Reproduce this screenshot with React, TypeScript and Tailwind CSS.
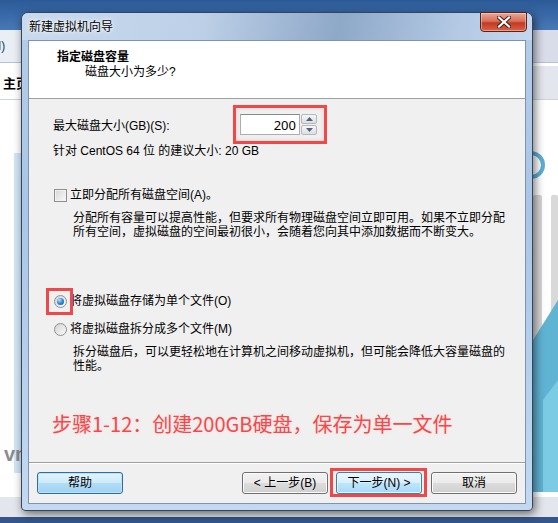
import React from "react";

const WinButton = ({ label, variant }: { label: string; variant?: "focus" | "default" }) => {
  const skin =
    variant === "focus"
      ? "border-[#2c6ea3] shadow-[inset_0_0_0_1px_#b9e3fa] bg-[linear-gradient(to_bottom,#e3f4fd_0%,#cdeafb_50%,#b2dcf6_50%,#9fd3f2_100%)]"
      : variant === "default"
      ? "border-[#3c7fb1] shadow-[inset_0_0_0_1px_#e8f6fd] bg-[linear-gradient(to_bottom,#eaf6fd_0%,#d9f0fc_50%,#bee6fd_50%,#a7d9f5_100%)]"
      : "border-[#707070] shadow-[inset_0_0_0_1px_#fbfbfb] bg-[linear-gradient(to_bottom,#f2f2f2_0%,#ebebeb_50%,#dddddd_50%,#cfcfcf_100%)]";
  return (
    <div
      className={`w-[86px] h-[22px] rounded-[3px] border flex items-center justify-center text-[12px] text-black ${skin}`}
    >
      {label}
    </div>
  );
};

const CheckBox = () => (
  <span className="w-[13px] h-[13px] shrink-0 border border-[#8e8f8f] bg-[linear-gradient(135deg,#d6d6d6,#f9f9f9)] shadow-[inset_0_0_0_1px_#f1f1f1]" />
);

const Radio = ({ checked }: { checked?: boolean }) => (
  <span className="w-[13px] h-[13px] shrink-0 rounded-full border border-[#8e8f8f] bg-[linear-gradient(135deg,#d4d4d4,#fafafa)] flex items-center justify-center">
    {checked && (
      <span className="w-[7px] h-[7px] rounded-full bg-[radial-gradient(circle_at_35%_30%,#b8e4ff_0%,#3b8fd6_45%,#0d4f93_100%)]" />
    )}
  </span>
);

const SpinArrow = ({ up }: { up?: boolean }) => (
  <div className="w-[16px] h-[10px] rounded-[2px] border border-[#b4b7bd] bg-[linear-gradient(to_bottom,#f6f6f6,#dedede)] flex items-center justify-center">
    <svg width="7" height="4" viewBox="0 0 7 4">
      {up ? <path d="M0 4 L3.5 0 L7 4 Z" fill="#4d6185" /> : <path d="M0 0 L3.5 4 L7 0 Z" fill="#4d6185" />}
    </svg>
  </div>
);

export default function App() {
  return (
    <div className="relative w-[558px] h-[523px] overflow-hidden bg-white font-['Liberation_Sans','Noto_Sans_CJK_SC',sans-serif]">
      {/* host window behind the wizard */}
      <div className="flex flex-col h-full">
        <div className="h-[30px] bg-[linear-gradient(to_bottom,#2b5a97,#4878b6)]" />
        <div className="h-[33px] flex justify-between bg-[#eaeef5] border-b border-[#b7c2d4]">
          <span className="text-[12px] text-[#1e395b] -ml-[6px] pt-[7px]">(I)</span>
          <span className="w-[25px] bg-[#d9dce9]" />
        </div>
        <div className="h-[37px] flex justify-between bg-white border-b border-[#cdd3dd]">
          <span className="text-[13px] font-bold text-black pl-[3px] pt-[11px]">主页</span>
          <span className="w-[25px] bg-[#e4e6ed] border-t-[3px] border-white" />
        </div>
        <div className="flex-1 flex justify-between">
          <svg width="22" height="397" viewBox="0 0 22 397">
            <rect x="14" y="53" width="8" height="320" fill="#d3e6f7" />
            <text x="4" y="361" fontSize="20" fontWeight="bold" fill="#8c8c8c" fontFamily="Liberation Sans">vm</text>
          </svg>
          <svg width="25" height="397" viewBox="0 0 25 397">
            <circle cx="-2" cy="65" r="12" stroke="#5eaed8" strokeWidth="4" fill="none" />
            <rect x="0" y="95" width="9" height="150" rx="2" fill="#d6d6d6" />
            <rect x="18" y="95" width="7" height="150" rx="2" fill="#d9d9d9" />
            <path d="M0 240 L25 200 L25 392 L0 392 Z" fill="#5fb3d3" />
            <path d="M10 300 L25 280 L25 392 L10 392 Z" fill="#7ccbe4" />
          </svg>
        </div>
        <div className="h-[20px] bg-[#e3e6ec]" />
        <div className="h-[6px] bg-[#34568a]" />
      </div>

      {/* wizard dialog */}
      <div className="absolute left-[21px] top-[12px] w-[512px] h-[499px] rounded-t-[7px] rounded-b-[4px] border border-[#34465e] shadow-[2px_3px_10px_rgba(0,0,0,0.55)] bg-[linear-gradient(to_bottom,#b5cde8,#a9c6e6_40%,#c2d9f0)] flex flex-col">
        <div className="relative h-[27px] rounded-t-[6px] bg-[linear-gradient(100deg,#c9daee_0%,#bdd0e7_35%,#8ea8c8_62%,#b3c9e4_85%,#c4d7ee_100%)] flex items-center pl-[7px]">
          <span className="text-[12px] text-black [text-shadow:0_0_6px_#ffffff,0_0_3px_#ffffff]">新建虚拟机向导</span>
          <div className="absolute right-[5px] top-[-1px] w-[47px] h-[20px] rounded-b-[4px] border border-[#5a2119] bg-[linear-gradient(to_bottom,#e9a897_0%,#d7705a_45%,#c43a22_55%,#d5634a_100%)] shadow-[inset_0_0_0_1px_rgba(255,220,210,0.5)] flex items-center justify-center">
            <svg width="14" height="12" viewBox="0 0 14 12">
              <path d="M2 1.5 L12 10.5 M12 1.5 L2 10.5" stroke="#3b1a14" strokeWidth="4" strokeLinecap="square" />
              <path d="M2 1.5 L12 10.5 M12 1.5 L2 10.5" stroke="#ffffff" strokeWidth="2.2" strokeLinecap="square" />
            </svg>
          </div>
        </div>

        <div className="mx-[6px] mb-[6px] flex-1 border border-[#7f93ad] bg-[#f0f0f0] flex flex-col text-[12px] text-black">
          {/* header */}
          <div className="h-[58px] bg-white border-b border-[#a0a0a0] pt-[9px] leading-[15px]">
            <div className="pl-[28px] font-bold">指定磁盘容量</div>
            <div className="pl-[56px]">磁盘大小为多少?</div>
          </div>

          {/* body */}
          <div className="flex-1 flex flex-col leading-[14px]">
            <div className="flex items-center mt-[6px]">
              <span className="w-[204px] pl-[24px] pt-[3px]">最大磁盘大小(GB)(S):</span>
              <div className="w-[94px] h-[39px] border-[3px] border-[#f04848] flex items-center pl-[4px] gap-[1px] shadow-[inset_0_0_4px_rgba(0,0,0,0.15)]">
                <div className="w-[60px] h-[21px] bg-white border border-[#abadb3] border-t-[#858992] flex items-center justify-end pr-[3px] font-['Noto_Sans',sans-serif] text-[13px]">
                  200
                </div>
                <div className="flex flex-col gap-[1px]">
                  <SpinArrow up />
                  <SpinArrow />
                </div>
              </div>
            </div>
            <div className="pl-[24px]">针对 CentOS 64 位 的建议大小: 20 GB</div>

            <div className="flex items-center gap-[3px] pl-[25px] mt-[30px]">
              <CheckBox />
              <span>立即分配所有磁盘空间(A)。</span>
            </div>
            <div className="pl-[44px] mt-[9px]">
              <div>分配所有容量可以提高性能，但要求所有物理磁盘空间立即可用。如果不立即分配</div>
              <div>所有空间，虚拟磁盘的空间最初很小，会随着您向其中添加数据而不断变大。</div>
            </div>

            <div className="flex items-center gap-[3px] pl-[25px] mt-[55px]">
              <span className="relative flex">
                <Radio checked />
                <span className="absolute left-[-8px] top-[-7px] w-[27px] h-[27px] border-[3px] border-[#f04848]" />
              </span>
              <span>将虚拟磁盘存储为单个文件(O)</span>
            </div>
            <div className="flex items-center gap-[3px] pl-[25px] mt-[14px]">
              <Radio />
              <span>将虚拟磁盘拆分成多个文件(M)</span>
            </div>
            <div className="pl-[44px] mt-[9px]">
              <div>拆分磁盘后，可以更轻松地在计算机之间移动虚拟机，但可能会降低大容量磁盘的</div>
              <div>性能。</div>
            </div>

            <div className="pl-[23px] mt-[37px] text-[20px] leading-[28px] text-[#f24a4c] font-['Noto_Sans_CJK_SC',sans-serif] [text-shadow:0_0_3px_#ffd6d6]">
              步骤1-12：创建200GB硬盘，保存为单一文件
            </div>
          </div>

          {/* footer */}
          <div className="h-[41px] border-t border-[#a0a0a0] shadow-[inset_0_1px_0_#ffffff] flex items-start pt-[9px] pl-[8px] pr-[8px]">
            <WinButton label="帮助" variant="focus" />
            <div className="flex-1" />
            <WinButton label="< 上一步(B)" />
            <div className="ml-[8px] relative flex">
              <WinButton label="下一步(N) >" variant="default" />
              <span className="absolute left-[-6px] top-[-4px] w-[97px] h-[29px] border-[3px] border-[#f04848]" />
            </div>
            <div className="ml-[9px]">
              <WinButton label="取消" />
            </div>
          </div>
        </div>
      </div>
    </div>
  );
}
